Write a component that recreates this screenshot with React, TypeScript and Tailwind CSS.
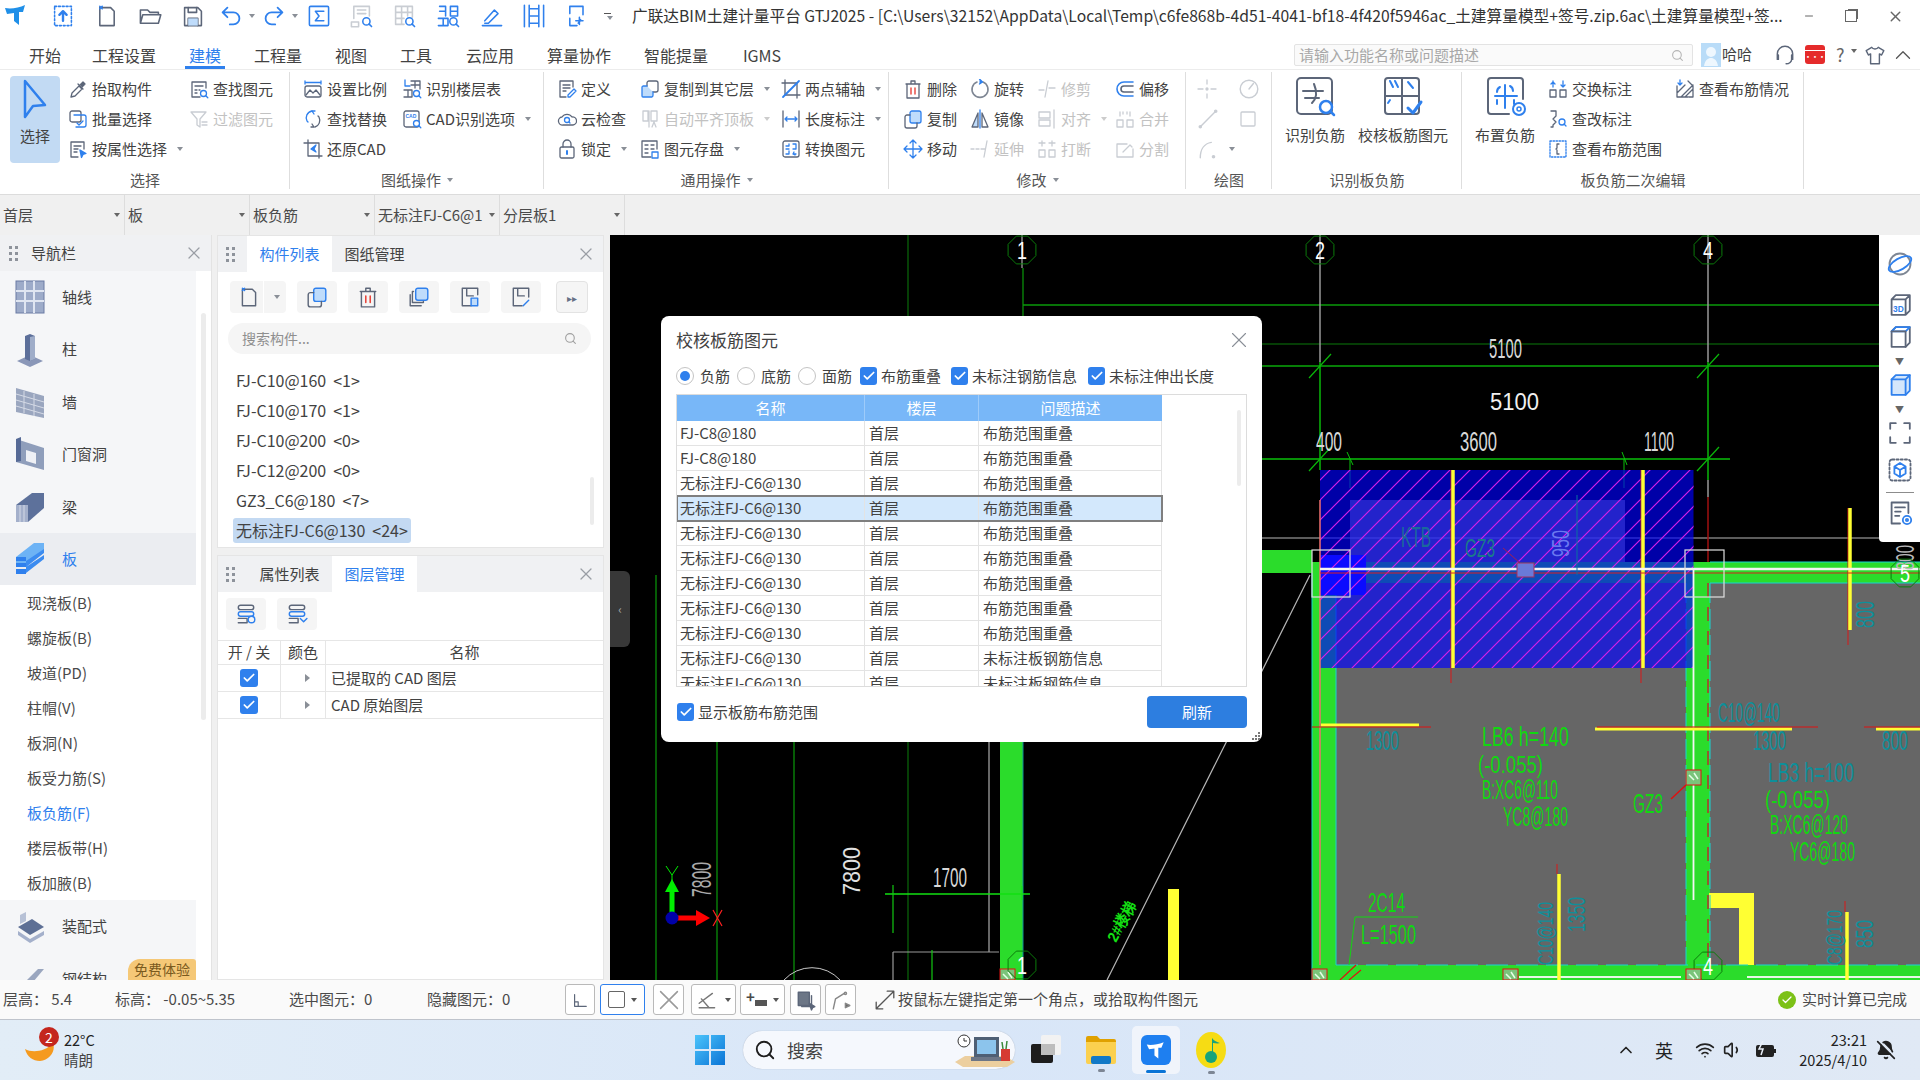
import type { ReactNode } from "react";
import { ChevronUp, Search, Minus, X, Check, Wifi, Volume1, BellOff } from "lucide-react";

const G = "#5c6679";
const B = "#2f80ed";
const L = "#c9cdd3";
const RED = "#e5352b";

function I({ s = 20, c = G, w = 1.3, children }: { s?: number; c?: string; w?: number; children: ReactNode }) {
  return (
    <svg width={s} height={s} viewBox="0 0 20 20" fill="none" stroke={c} strokeWidth={w} strokeLinecap="round" strokeLinejoin="round" className="shrink-0">
      {children}
    </svg>
  );
}

const Q = () => (
  <g stroke={B}>
    <circle cx="14.5" cy="14.5" r="3" fill="#fff" />
    <path d="M16.8 16.8l2 2" />
  </g>
);

const ic = {
  pick: <I><path d="M3 18l1-4 7-7 3 3-7 7z" /><path d="M10 5l5 5M12 6l3-3 2 2-3 3" fill={G} /></I>,
  batch: <I><rect x="2" y="2" width="11" height="11" rx="2" /><path d="M6 6h10a2 2 0 012 2v8a2 2 0 01-2 2H8" stroke={B} /><path d="M9 14l2 2 4-4" stroke={B} /></I>,
  prop: <I><path d="M16 10V3H3v15h7" /><path d="M6 7h7M6 10h4M6 13h3" /><path d="M12 11l6 3.5-3 1-1.5 3z" fill={B} stroke={B} /></I>,
  find: <I><path d="M17 9V3H3v15h8" /><path d="M6 7h8M6 11h2M6 14h2M10 11h1" /><Q /></I>,
  filter: <I c={L}><path d="M2 3h15l-6 7v8l-3-2v-6z" /><path d="M13 13h5M13 16h5" /></I>,
  scale: <I><path d="M2 2v3M18 2v3M3 3.500h14" stroke={B} /><rect x="2" y="7" width="16" height="11" rx="2" /><path d="M3 16l4-5 3 3 3-3 4 5" /></I>,
  replace: <I><path d="M9 2C4 3 2 8 4 12l1 1" stroke={B} /><path d="M12 18c4-1 6-6 4-10l-1-1" /><path d="M12 2l-3 0 2 3" stroke={B} /><path d="M8 18l3 0-2-3" /></I>,
  restore: <I><path d="M5 1v16h14M1 4h15v15" /><path d="M13 6l-5 4 5 3-2-3z" fill={B} stroke={B} /></I>,
  layer: <I><path d="M3 1v6M3 7h5" stroke={B} /><path d="M9 2h9v8M13 2v7M9 6h9M2 11h8v7H2M6 11v7" /><Q /></I>,
  cad: <I><rect x="2" y="2" width="15" height="16" rx="2" /><text x="3.500" y="8.500" fontSize="5" fill={B} stroke="none" fontFamily="Liberation Sans" fontWeight="700">CAD</text><Q /></I>,
  define: <I><path d="M16 8V2H3v16h6" /><path d="M6 6h7M6 9h7M6 12h3" /><path d="M11 16l6-6 2 2-6 6h-2z" stroke={B} /></I>,
  cloud: <I><path d="M6 16a4 4 0 01-1-8 6 6 0 0110 0 4 4 0 011 8z" /><circle cx="10" cy="11" r="2.500" stroke={B} /><path d="M12 13l1 1" stroke={B} /></I>,
  lock: <I><rect x="3" y="8" width="14" height="11" rx="1.500" /><path d="M6 8V5a4 4 0 018 0v3" /><path d="M10 12v3" stroke={B} strokeWidth="2" /></I>,
  copyL: <I><rect x="7" y="2" width="11" height="11" rx="2" /><path d="M7 7H3a2 2 0 00-1 1v9a1 1 0 001 1h9a2 2 0 001-2v-3" fill="#bfdcfb" stroke={B} /></I>,
  autoAlign: <I c={L}><path d="M3 2h5v10H3zM11 2h6v10h-6zM9 2v16M12 18l2-5 2 5" /></I>,
  saveEl: <I><path d="M17 10V2H2v16h9" /><path d="M5 6h3M11 6h3M5 10h3M11 10h3M5 14h3" /><rect x="12" y="13" width="6" height="6" stroke={B} /></I>,
  twoPt: <I><path d="M4 1v15h15M1 4h15v15" /><path d="M2 18L18 2" stroke={B} strokeWidth="1.800" /></I>,
  len: <I><path d="M2 2v16M18 2v16" /><path d="M4 10h12M6 8l-2 2 2 2M14 8l2 2-2 2" stroke={B} /></I>,
  conv: <I><rect x="2" y="2" width="16" height="16" rx="2" /><path d="M5 7h3V5M5 10h3M5 15h3v-3M12 5h3v5h-3M15 15h-3l1-2M12 15l2 1" stroke={B} /></I>,
  del: <I><path d="M3 5h14M8 5V2h4v3M4 5v14h12V5" /><path d="M8 9v6M12 9v6" stroke={RED} /></I>,
  rotate: <I c="#7f8794"><path d="M7 3a8 8 0 106 0" strokeWidth="1.600" /><path d="M9.500 0l3 3-3 2" stroke={B} fill={B} /></I>,
  trim: <I c={L}><path d="M2 11h5M12 9h6M11 2L8 18" /></I>,
  offset: <I c={B} w={1.6}><path d="M18 3H9a7 7 0 000 14h9" /><path d="M18 7H9a3 3 0 000 6h9" stroke={G} /></I>,
  copy: <I><rect x="7" y="2" width="11" height="12" rx="2" fill="#bfdcfb" stroke={B} /><path d="M7 6H4a2 2 0 00-2 2v9a2 2 0 002 2h8a2 2 0 002-2v-3" /></I>,
  mirror: <I><path d="M8 4L2 18h6z" fill="#bfdcfb" stroke={G} /><path d="M12 4l6 14h-6z" /><path d="M10 1v18" stroke={B} /></I>,
  alignI: <I c={L}><rect x="2" y="3" width="11" height="6" /><rect x="2" y="11" width="11" height="6" /><path d="M17 1v18" /></I>,
  merge: <I c={L}><rect x="2" y="11" width="6" height="7" /><rect x="12" y="11" width="6" height="7" /><path d="M5 3v4M15 3v4M8 3v2M12 3v2" /></I>,
  move: <I c={B}><path d="M10 1v18M1 10h18M7 4l3-3 3 3M7 16l3 3 3-3M4 7l-3 3 3 3M16 7l3 3-3 3" /></I>,
  extend: <I c={L}><path d="M1 10h3M6 10h3M11 10h4M17 2l-3 16" /></I>,
  breakI: <I c={L}><rect x="2" y="11" width="6" height="7" /><rect x="12" y="11" width="6" height="7" /><path d="M5 2l0 5M15 2v5M2 4h6M12 4h6" /></I>,
  split: <I c={L}><path d="M18 10v8H2V5h10" /><path d="M8 13l7-7 2 2" /></I>,
  d1: <I c={L}><path d="M10 1v4M10 15v4M1 10h5M14 10h5" /><circle cx="10" cy="10" r="1" fill={L} /></I>,
  d2: <I c={L} s={22}><circle cx="10" cy="10" r="8" /><path d="M10 10l4-5" /></I>,
  d3: <I c={L} s={22}><path d="M3 17L17 3" /><circle cx="3" cy="17" r="1" /><circle cx="17" cy="3" r="1" /></I>,
  d4: <I c={L}><rect x="3" y="3" width="14" height="14" rx="1" /></I>,
  d5: <I c={L} s={22}><path d="M3 18c0-8 4-13 10-14" /><circle cx="15" cy="17" r="1" fill={L} /></I>,
  swap: <I><rect x="2" y="11" width="6" height="7" /><rect x="12" y="11" width="6" height="7" /><path d="M5 2v6M15 2v6M3 5l2-2 2 2M13 6l2 2 2-2" stroke={B} /></I>,
  edit: <I><path d="M3 2h5v5l-3 3 3 3-3 3v2H3" /><circle cx="14" cy="13" r="3" stroke={B} /><path d="M16 15l2 2" stroke={B} /></I>,
  range: <I c={B}><rect x="2" y="2" width="16" height="16" strokeDasharray="1.500 1.500" /><path d="M11 5H9v4l-1 1 1 1v4h2" stroke={G} /></I>,
  see: <I><path d="M2 7v11h11M6 18l12-12M2 14L10 6M10 18l8-8M13 2l5 5v11h-4" /><path d="M5 1v5l-2-2M5 6l2-2" stroke={B} /></I>,
};

const Arrow = ({ c = "#8a8f97" }: { c?: string }) => (
  <span className="inline-block w-0 h-0 border-l-[3.500px] border-r-[3.500px] border-t-[4px] border-l-transparent border-r-transparent ml-[6px] shrink-0" style={{ borderTopColor: c }} />
);

function Item({ icon, label, arrow, off, w }: { icon?: ReactNode; label?: string; arrow?: boolean; off?: boolean; w: string }) {
  return (
    <div className={`flex items-center h-[30px] shrink-0 gap-[4px] whitespace-nowrap text-[15px] ${w} ${off ? "text-[#c2c2c2]" : "text-[#424242]"}`}>
      {icon}
      {label && <span>{label}</span>}
      {arrow && <Arrow c={off ? "#cccccc" : "#8a8f97"} />}
    </div>
  );
}

function Group({ label, arrow, w, children }: { label: string; arrow?: boolean; w: string; children: ReactNode }) {
  return (
    <div className={`relative flex flex-col shrink-0 ${w}`}>
      <div className="flex h-[95px] pt-[4px] shrink-0">{children}</div>
      <div className="h-[30px] shrink-0 flex items-center justify-center text-[15px] text-[#555555]">
        {label}
        {arrow && <Arrow />}
      </div>
      <div className="absolute right-0 top-[2px] bottom-[5px] w-px bg-[#dedede]" />
    </div>
  );
}

function BigIcon({ children }: { children: ReactNode }) {
  return (
    <svg width="44" height="42" viewBox="0 0 44 42" fill="none" strokeLinecap="round" strokeLinejoin="round" className="mx-auto">
      {children}
    </svg>
  );
}

function Ribbon() {
  return (
    <div className="flex h-[125px] bg-white shrink-0 border-b border-[#dcdcdc] shadow-[0_1px_2px_#d5d5d5]">
      <Group label="选择" w="w-[290px]">
        <div className="ml-[10px] mt-[2px] w-[50px] h-[87px] bg-[#c2daf3] rounded-[4px] flex flex-col items-center pt-[3px] shrink-0">
          <svg width="30" height="42" viewBox="0 0 30 42" fill="none"><path d="M5 2l20 24-12 1-8 11z" fill="#c2daf3" stroke="#2f80ed" strokeWidth="2.500" strokeLinejoin="round" /></svg>
          <span className="text-[15px] text-[#424242] mt-[4px]">选择</span>
        </div>
        <div className="ml-[8px] flex flex-col w-[121px] shrink-0">
          <Item icon={ic.pick} label="抬取构件" w="w-full" />
          <Item icon={ic.batch} label="批量选择" w="w-full" />
          <Item icon={ic.prop} label="按属性选择" arrow w="w-full" />
        </div>
        <div className="flex flex-col">
          <Item icon={ic.find} label="查找图元" w="w-full" />
          <Item icon={ic.filter} label="过滤图元" off w="w-full" />
        </div>
      </Group>
      <Group label="图纸操作" arrow w="w-[254px]">
        <div className="ml-[13px] w-[99px] flex flex-col shrink-0">
          <Item icon={ic.scale} label="设置比例" w="w-full" />
          <Item icon={ic.replace} label="查找替换" w="w-full" />
          <Item icon={ic.restore} label="还原CAD" w="w-full" />
        </div>
        <div className="flex flex-col">
          <Item icon={ic.layer} label="识别楼层表" w="w-full" />
          <Item icon={ic.cad} label="CAD识别选项" arrow w="w-full" />
        </div>
      </Group>
      <Group label="通用操作" arrow w="w-[345px]">
        <div className="ml-[13px] w-[83px] flex flex-col shrink-0">
          <Item icon={ic.define} label="定义" w="w-full" />
          <Item icon={ic.cloud} label="云检查" w="w-full" />
          <Item icon={ic.lock} label="锁定" arrow w="w-full" />
        </div>
        <div className="w-[141px] flex flex-col shrink-0">
          <Item icon={ic.copyL} label="复制到其它层" arrow w="w-full" />
          <Item icon={ic.autoAlign} label="自动平齐顶板" arrow off w="w-full" />
          <Item icon={ic.saveEl} label="图元存盘" arrow w="w-full" />
        </div>
        <div className="flex flex-col">
          <Item icon={ic.twoPt} label="两点辅轴" arrow w="w-full" />
          <Item icon={ic.len} label="长度标注" arrow w="w-full" />
          <Item icon={ic.conv} label="转换图元" w="w-full" />
        </div>
      </Group>
      <Group label="修改" arrow w="w-[297px]">
        <div className="ml-[14px] w-[67px] flex flex-col shrink-0">
          <Item icon={ic.del} label="删除" w="w-full" />
          <Item icon={ic.copy} label="复制" w="w-full" />
          <Item icon={ic.move} label="移动" w="w-full" />
        </div>
        <div className="w-[67px] flex flex-col shrink-0">
          <Item icon={ic.rotate} label="旋转" w="w-full" />
          <Item icon={ic.mirror} label="镜像" w="w-full" />
          <Item icon={ic.extend} label="延伸" off w="w-full" />
        </div>
        <div className="w-[78px] flex flex-col shrink-0">
          <Item icon={ic.trim} label="修剪" off w="w-full" />
          <Item icon={ic.alignI} label="对齐" arrow off w="w-full" />
          <Item icon={ic.breakI} label="打断" off w="w-full" />
        </div>
        <div className="flex flex-col">
          <Item icon={ic.offset} label="偏移" w="w-full" />
          <Item icon={ic.merge} label="合并" off w="w-full" />
          <Item icon={ic.split} label="分割" off w="w-full" />
        </div>
      </Group>
      <Group label="绘图" w="w-[86px]">
        <div className="ml-[11px] w-[41px] flex flex-col shrink-0">
          <Item icon={ic.d1} w="w-full" />
          <Item icon={ic.d3} w="w-full" />
          <Item icon={ic.d5} arrow w="w-full" />
        </div>
        <div className="flex flex-col">
          <Item icon={ic.d2} w="w-full" />
          <Item icon={ic.d4} w="w-full" />
        </div>
      </Group>
      <Group label="识别板负筋" w="w-[190px]">
        <div className="w-[86px] flex flex-col items-center text-[15px] text-[#424242] pt-[2px] shrink-0">
          <BigIcon>
            <rect x="4" y="2" width="35" height="36" rx="4" stroke={G} strokeWidth="2" />
            <path d="M10 15h20M21 8c3 7 3 14-2 19M12 22h14" stroke={G} strokeWidth="2" />
            <circle cx="33" cy="31" r="6" stroke={B} strokeWidth="2.500" fill="#fff" />
            <path d="M37 35l4 4" stroke={B} strokeWidth="2.500" />
          </BigIcon>
          <span className="mt-[6px] whitespace-nowrap">识别负筋</span>
        </div>
        <div className="flex flex-col items-center text-[15px] text-[#424242] pt-[2px]">
          <BigIcon>
            <rect x="4" y="2" width="34" height="36" rx="3" stroke={G} strokeWidth="2" />
            <path d="M4 20h34M21 2v36" stroke={G} strokeWidth="2" />
            <path d="M9 5l3 6M14 5l3 6M27 6l5 6M9 24l-2 3" stroke={B} strokeWidth="2" />
            <path d="M27 32l5 5 8-11" stroke={B} strokeWidth="3" fill="#fff" />
          </BigIcon>
          <span className="mt-[6px] whitespace-nowrap">校核板筋图元</span>
        </div>
      </Group>
      <Group label="板负筋二次编辑" w="w-[342px]">
        <div className="w-[86px] flex flex-col items-center text-[15px] text-[#424242] pt-[2px] shrink-0">
          <BigIcon>
            <path d="M26 38H8a3 3 0 01-3-3V5a3 3 0 013-3h29a3 3 0 013 3v18" stroke={G} strokeWidth="2" />
            <path d="M12 20h22M22 9v23M14 16c0-3 1-4 3-5M30 15c0-3-1-4-3-5M14 24v4M31 24v4" stroke={B} strokeWidth="2" />
            <circle cx="36" cy="33" r="6" stroke={B} strokeWidth="2" fill="#fff" />
            <circle cx="36" cy="33" r="2" stroke={B} strokeWidth="1.500" />
          </BigIcon>
          <span className="mt-[6px] whitespace-nowrap">布置负筋</span>
        </div>
        <div className="w-[127px] flex flex-col shrink-0">
          <Item icon={ic.swap} label="交换标注" w="w-full" />
          <Item icon={ic.edit} label="查改标注" w="w-full" />
          <Item icon={ic.range} label="查看布筋范围" w="w-full" />
        </div>
        <div className="flex flex-col">
          <Item icon={ic.see} label="查看布筋情况" w="w-full" />
        </div>
      </Group>
    </div>
  );
}

function TitleBar() {
  return (
    <div className="flex items-center h-[32px] bg-white shrink-0 relative">
      <div className="w-[632px] flex items-center shrink-0">
        <svg width="26" height="24" viewBox="0 0 26 24" className="ml-[4px] mr-[21px]"><path d="M1 4c6 1 14 0 20-3l-2 7-4 0v13l-5-4V9l-7 1z" fill="#1f8fe8" /></svg>
        <I s={24} c={B}><rect x="3" y="2" width="14" height="16" strokeDasharray="1.600 1.600" /><path d="M10 14V6M7 9l3-3 3 3" strokeWidth="2" /></I>
        <div className="ml-[20px]"><I s={24}><path d="M4 3v15h12V6l-3-3H4z" /><path d="M4 2l2 2M6 2L4 4" stroke={B} /></I></div>
        <div className="ml-[19px]"><I s={24}><path d="M2 16V5h6l2 2h7v2M2 16l2-7h15l-2 7z" /></I></div>
        <div className="ml-[19px]"><I s={24}><path d="M3 3h11l3 3v12H3z" /><path d="M6 3v4h7V3M6 18v-6h8v6" /><rect x="6" y="12" width="8" height="6" fill="#bfdcfb" stroke="none" /></I></div>
        <div className="ml-[14px] flex items-center"><I s={24} c={B} w={1.500}><path d="M4 7h8a5 5 0 010 10H9M7 3L3 7l4 4" /></I><Arrow /></div>
        <div className="ml-[7px] flex items-center"><I s={24} c={B} w={1.500}><path d="M16 7H8a5 5 0 000 10h3M13 3l4 4-4 4" /></I><Arrow /></div>
        <div className="ml-[9px]"><I s={24} c={B}><rect x="2" y="2" width="16" height="16" rx="1" /><path d="M14 6H7l3 4-3 4h7" /></I></div>
        <div className="ml-[18px]"><I s={24} c={L}><path d="M4 12V2h13v8M7 5h7M7 8h7M2 15h6v4H2z" /><Q /></I></div>
        <div className="ml-[19px]"><I s={24} c={L}><path d="M3 2h14v9M3 2v15h7M8 2v15M13 2v8M3 7h14M3 12h7" /><Q /></I></div>
        <div className="ml-[20px]"><I s={24} c={B}><path d="M8 2v8M3 2h5M3 6h5M2 12h8v6H2M6 12v6M12 2h6v8h-6zM12 6h6" /><Q /></I></div>
        <div className="ml-[20px]"><I s={24} c={B}><path d="M2 18h16M4 14l8-9 3 3-8 8H4" /></I></div>
        <div className="ml-[18px]"><I s={24} c={B}><path d="M2 1v18M18 1v18M6 1v18M14 1v18M6 4h8M6 10h8M6 16h8" /></I></div>
        <div className="ml-[19px]"><I s={24} c={B}><path d="M15 9V2H4v6M4 12v6h6M9 14h6M12 11v6" /><path d="M13 13l-2 3" /></I></div>
        <div className="ml-[12px] flex flex-col items-center gap-[2px]"><span className="w-[7px] h-px bg-[#555555]" /><Arrow /></div>
      </div>
      <div className="text-[15.700px] text-[#333333] whitespace-nowrap w-[1150px] overflow-hidden">广联达BIM土建计量平台 GTJ2025 - [C:\Users\32152\AppData\Local\Temp\c6fe868b-4d51-4041-bf18-4f420f5946ac_土建算量模型+签号.zip.6ac\土建算量模型+签...</div>
      <div className="ml-auto flex items-center text-[#666666]">
        <Minus size={12} />
        <span className="w-[12px] h-[12px] ml-[30px] border border-[#666666] shadow-[2px_-2px_0_-1px_#666666]" />
        <X size={17} className="ml-[30px] mr-[16px]" />
      </div>
    </div>
  );
}

const tabs: [string, string][] = [
  ["开始", "w-[62px]"], ["工程设置", "w-[96px]"], ["建模", "w-[66px]"], ["工程量", "w-[80px]"], ["视图", "w-[66px]"],
  ["工具", "w-[64px]"], ["云应用", "w-[84px]"], ["算量协作", "w-[94px]"], ["智能提量", "w-[100px]"], ["IGMS", "w-[72px]"],
];

function MenuBar() {
  return (
    <div className="flex items-center h-[38px] bg-white shrink-0 pl-[14px] text-[16px] text-[#424242] border-b border-[#eeeeee] whitespace-nowrap">
      {tabs.map(([t, w]) => (
        <div key={t} className={`${w} shrink-0 h-full pt-[8px] flex items-center justify-center relative ${t === "建模" ? "text-[#2f80ed]" : ""}`}>
          {t}
          {t === "建模" && <div className="absolute bottom-0 left-[13px] right-[13px] h-[3px] bg-[#2f80ed]" />}
        </div>
      ))}
      <div className="ml-[496px] mt-[9px] w-[399px] h-[22px] shrink-0 rounded-[2px] border border-[#e3e3e3] bg-[#fafafa] flex items-center px-[4px] text-[15px] text-[#a8a8a8]">
        请输入功能名称或问题描述
        <Search size={13} className="ml-auto mr-[4px] text-[#b5b5b5]" />
      </div>
      <div className="ml-[8px] mt-[9px] w-[20px] h-[24px] shrink-0 bg-[#b9dcf8] flex items-center justify-center">
        <svg width="18" height="22" viewBox="0 0 18 22"><circle cx="9" cy="8" r="5" fill="#eef7fe" /><path d="M2 22c1-6 4-8 7-8s6 2 7 8z" fill="#eef7fe" /></svg>
      </div>
      <span className="text-[15px] ml-px mt-[8px] shrink-0">哈哈</span>
      <div className="ml-[22px] mt-[9px]"><I s={22}><path d="M3 11V9a7 7 0 0114 0v2M3 10h1v4H3zM16 10h1v4h-1zM16 14c0 2-2 4-5 4" /></I></div>
      <div className="ml-[9px] mt-[8px] w-[20px] h-[19px] shrink-0 bg-[#e52b2b] rounded-[3px] flex flex-col items-center justify-center gap-[2px]">
        <span className="w-[20px] h-px bg-[#ffffff]" />
        <span className="text-[#ffffff] text-[7px] leading-[7px] font-bold">•••</span>
      </div>
      <span className="ml-[11px] mt-[8px] text-[18px] text-[#666666]">?</span>
      <Arrow c="#666666" />
      <div className="ml-[7px] mt-[9px]"><I s={22}><path d="M7 3L2 6l2 4 2-1v9h8V9l2 1 2-4-5-3c-1 2-5 2-6 0z" /></I></div>
      <ChevronUp size={26} strokeWidth={1.200} className="ml-[4px] mt-[9px] shrink-0 text-[#555555]" />
    </div>
  );
}

function SelectorBar() {
  const cells = ["首层", "板", "板负筋", "无标注FJ-C6@1", "分层板1"];
  return (
    <div className="flex h-[40px] bg-[#f0f0f0] shrink-0 text-[15px] text-[#4a4a4a]">
      {cells.map((c) => (
        <div key={c} className="w-[125px] pl-[3px] pr-[4px] flex items-center justify-between border-r border-[#dddddd] whitespace-nowrap overflow-hidden">
          {c}
          <Arrow c="#666666" />
        </div>
      ))}
    </div>
  );
}

const Grip = () => (
  <div className="grid grid-cols-2 gap-x-[4px] gap-y-[3px] w-[8px]">
    {[0, 1, 2, 3, 4, 5].map((i) => <span key={i} className="w-[3px] h-[3px] bg-[#8e939b]" />)}
  </div>
);

function NavIcon({ k }: { k: string }) {
  const shapes: Record<string, ReactNode> = {
    轴线: <><rect x="2" y="2" width="28" height="32" fill="#9dabc9" stroke="#6a7aa3" /><path d="M11 2v32M20 2v32M2 12h28M2 22h28" stroke="#dfe5f1" strokeWidth="2" /></>,
    柱: <><path d="M3 29l13-6 13 6-13 6z" fill="#8a97b8" /><path d="M11 4l5-2 5 2v23l-5 2-5-2z" fill="#5c6f9a" /><path d="M16 5v24l5-2V4z" fill="#9fadc9" /></>,
    墙: <><path d="M2 4l28 8v22L2 28z" fill="#9aa6bf" /><path d="M2 10l28 8M2 16l28 8M2 22l28 8M10 7v22M20 10v22" stroke="#d5dae6" /></>,
    门窗洞: <><path d="M2 3l28 9v22L2 26z" fill="#8f9ebb" /><path d="M12 14l10 3v11l-10-3z" fill="#eef0f5" /><path d="M2 3l5-2 0 24-5 1z" fill="#566a96" /></>,
    梁: <><path d="M2 16L18 4h12v15L14 33H2z" fill="#5d719b" /><path d="M2 16h12v17H2z" fill="#a4b0cb" /><path d="M6 16v17M10 16v17" stroke="#d4dae7" /></>,
    板: <><path d="M2 16L20 2h10v8L12 24H2z" fill="#6db3f5" /><path d="M2 16h10v4H2zM2 22h10v4H2zM2 28h10v5H2z" fill="#2f80ed" /><path d="M12 20L30 8v4L12 26zM12 26l18-12v4L12 32z" fill="#3c8cf0" /></>,
    装配式: <><path d="M4 18l14-8 12 8-14 8z" fill="#5d6f95" /><path d="M4 22l12 8 14-8v4l-14 8L4 26z" fill="#a4b0cb" /><path d="M6 6l6-3v9l-6 3z" fill="#b7c1d6" /></>,
    钢结构: <><path d="M2 30L24 8h6L8 34z" fill="#9aa6bf" /></>,
  };
  return <svg width="32" height="36" viewBox="0 0 32 36" className="shrink-0">{shapes[k]}</svg>;
}

const navTop = ["轴线", "柱", "墙", "门窗洞", "梁", "板"];
const navSub = ["现浇板(B)", "螺旋板(B)", "坡道(PD)", "柱帽(V)", "板洞(N)", "板受力筋(S)", "板负筋(F)", "楼层板带(H)", "板加腋(B)"];

function NavRow({ k, active }: { k: string; active?: boolean }) {
  return (
    <div className={`h-[52.400px] pl-[14px] flex items-center gap-[16px] text-[15px] ${active ? "bg-[#ebedf1] text-[#2f80ed]" : "bg-[#f5f6f8] text-[#424242]"}`}>
      <NavIcon k={k} />
      {k}
    </div>
  );
}

function NavPanel() {
  return (
    <div className="w-[212px] shrink-0 flex flex-col bg-white border-r border-[#e3e3e3]">
      <div className="h-[36px] bg-[#f0f1f3] flex items-center pl-[9px] pr-[7px] text-[15px] text-[#424242] shrink-0">
        <Grip />
        <span className="ml-[14px]">导航栏</span>
        <X size={20} strokeWidth={1.500} className="ml-auto text-[#9a9ea5]" />
      </div>
      <div className="flex flex-1 overflow-hidden relative">
        <div className="w-[196px] shrink-0">
          {navTop.map((k) => <NavRow key={k} k={k} active={k === "板"} />)}
          {navSub.map((s) => (
            <div key={s} className={`h-[35px] pl-[27px] flex items-center text-[15px] ${s === "板负筋(F)" ? "text-[#2f80ed]" : "text-[#4a4a4a]"}`}>{s}</div>
          ))}
          <NavRow k="装配式" />
          <NavRow k="钢结构" />
        </div>
        <div className="ml-[5px] mt-[42px] w-[5px] h-[407px] rounded-full bg-[#ececec]" />
        <div className="absolute left-[128px] bottom-0 w-[68px] h-[21px] bg-[#f5c877] rounded-tl-[12px] rounded-tr-[3px] text-[14px] leading-[21px] text-center text-[#7a5a1e]">免费体验</div>
      </div>
    </div>
  );
}

function TabHead({ tabs: t, active }: { tabs: string[]; active: string }) {
  return (
    <div className="h-[36px] bg-[#f0f1f3] flex items-stretch text-[15px] text-[#424242] shrink-0">
      <div className="w-[29px] flex items-center pl-[8px]"><Grip /></div>
      {t.map((x) => (
        <div key={x} className={`w-[85px] flex items-center justify-center ${x === active ? "bg-white text-[#2f80ed]" : ""}`}>{x}</div>
      ))}
      <div className="ml-auto pr-[7px] flex items-center"><X size={20} strokeWidth={1.500} className="text-[#9a9ea5]" /></div>
    </div>
  );
}

const TBtn = ({ children, w = "w-[40px]" }: { children: ReactNode; w?: string }) => (
  <div className={`${w} h-[32px] bg-[#f5f5f5] rounded-[4px] flex items-center justify-center shrink-0`}>{children}</div>
);

const compList: [string, string][] = [["FJ-C10@160", "<1>"], ["FJ-C10@170", "<1>"], ["FJ-C10@200", "<0>"], ["FJ-C12@200", "<0>"], ["GZ3_C6@180", "<7>"], ["无标注FJ-C6@130", "<24>"]];

function MiddlePanels() {
  return (
    <div className="w-[387px] ml-[5px] shrink-0 flex flex-col gap-[7px]">
      <div className="h-[313px] bg-white border border-[#e5e5e5] relative flex flex-col">
        <TabHead tabs={["构件列表", "图纸管理"]} active="构件列表" />
        <div className="flex mt-[9px] pl-[12px]">
          <div className="flex w-[56px] h-[32px] bg-[#f5f5f5] rounded-[4px] items-center pl-[8px] shrink-0">
            <I s={22}><path d="M4 3v15h12V6l-3-3H4z" /><path d="M4 2l2 2M6 2L4 4" stroke={B} /></I>
            <div className="ml-[3px] pl-[4px] h-full flex items-center border-l border-white"><Arrow /></div>
          </div>
          <div className="ml-[11px]"><TBtn>{<I s={22}><rect x="7" y="2" width="11" height="12" rx="2" fill="#bfdcfb" stroke={B} /><path d="M7 6H4a2 2 0 00-2 2v9a2 2 0 002 2h8a2 2 0 002-2v-3" /></I>}</TBtn></div>
          <div className="ml-[11px]"><TBtn>{<I s={22}><path d="M3 5h14M8 5V2h4v3M4 5v14h12V5" /><path d="M8 9v6M12 9v6" stroke={RED} /></I>}</TBtn></div>
          <div className="ml-[11px]"><TBtn>{<I s={22}><rect x="7" y="2" width="11" height="11" rx="2" fill="#bfdcfb" stroke={B} /><path d="M5 5H4v10h10v-1M2 8v10h10" /></I>}</TBtn></div>
          <div className="ml-[11px]"><TBtn>{<I s={22}><path d="M17 8V2H3v16h8M7 2v7h6" /><rect x="11" y="11" width="6" height="7" fill="#bfdcfb" stroke={B} /></I>}</TBtn></div>
          <div className="ml-[11px]"><TBtn>{<I s={22}><path d="M17 10V2H3v16h8M7 2v7h6" /><path d="M12 18l5-5" stroke={B} /></I>}</TBtn></div>
          <div className="ml-[15px] w-[32px] h-[32px] bg-[#f5f5f5] border border-[#e3e3e3] rounded-[4px] flex items-center justify-center text-[10px] text-[#667085]">▸▸</div>
        </div>
        <div className="mt-[10px] ml-[10px] w-[363px] h-[31px] rounded-full bg-[#f5f5f5] flex items-center px-[14px] text-[14px] text-[#8f8f8f]">
          搜索构件...
          <Search size={13} className="ml-auto text-[#a0a0a0]" />
        </div>
        <div className="mt-[11px] flex flex-col">
          {compList.map(([a, b], i) => (
            <div key={a} className="h-[30px] flex items-center pl-[15px]">
              <div className={`h-[25px] flex items-center gap-[7px] text-[16px] text-[#424242] px-[3px] rounded-[3px] whitespace-nowrap ${i === 5 ? "bg-[#c3d9f2]" : ""}`}>
                <span>{a}</span><span>{b}</span>
              </div>
            </div>
          ))}
        </div>
        <div className="absolute left-[372px] top-[241px] w-[4px] h-[48px] bg-[#ececec] rounded-full" />
      </div>
      <div className="flex-1 bg-white border border-[#e5e5e5] flex flex-col">
        <TabHead tabs={["属性列表", "图层管理"]} active="图层管理" />
        <div className="flex gap-[11px] mt-[6px] pl-[8px]">
          <TBtn>{<I s={22}><rect x="3" y="2" width="14" height="4" rx="2" /><rect x="3" y="8" width="14" height="4" rx="2" stroke={B} /><path d="M3 14h8v4H3" /><circle cx="15" cy="15" r="3" stroke={B} /></I>}</TBtn>
          <TBtn>{<I s={22}><rect x="3" y="2" width="14" height="4" rx="2" /><rect x="3" y="8" width="14" height="4" rx="2" stroke={B} /><path d="M3 14h8v4H3" /><path d="M13 14l3 3 3-3" stroke={B} /></I>}</TBtn>
        </div>
        <div className="mt-[10px] text-[15px] text-[#424242]">
          <div className="flex h-[25px] border-y border-[#e6e6e6]">
            <div className="w-[63px] flex items-center justify-center border-r border-[#e6e6e6]">开 / 关</div>
            <div className="w-[45px] flex items-center justify-center border-r border-[#e6e6e6]">颜色</div>
            <div className="flex-1 flex items-center justify-center">名称</div>
          </div>
          {["已提取的 CAD 图层", "CAD 原始图层"].map((n) => (
            <div key={n} className="flex h-[27px] border-b border-[#e6e6e6]">
              <div className="w-[63px] flex items-center justify-center border-r border-[#e6e6e6]">
                <span className="w-[18px] h-[18px] rounded-[3px] bg-[#2f80ed] flex items-center justify-center"><Check size={14} strokeWidth={3} className="text-white" /></span>
              </div>
              <div className="w-[45px] flex items-center justify-center border-r border-[#e6e6e6]">
                <span className="w-0 h-0 border-y-[4px] border-y-transparent border-l-[5px] border-l-[#8a8f97] ml-[9px]" />
              </div>
              <div className="flex-1 flex items-center pl-[5px]">{n}</div>
            </div>
          ))}
        </div>
      </div>
    </div>
  );
}

const Cad = ({ x, y, t, w, h, fill = "#d8d8d8", rot, bold }: { x: number; y: number; t: string; w: number; h: number; fill?: string; rot?: number; bold?: boolean }) => (
  <text
    x={x}
    y={y}
    fontFamily="Liberation Sans"
    fontSize={h * 1.38}
    fill={fill}
    textLength={w}
    lengthAdjust="spacingAndGlyphs"
    fontWeight={bold ? 700 : 400}
    transform={rot ? `rotate(${rot} ${x} ${y})` : undefined}
  >
    {t}
  </text>
);

const Bubble = ({ x, y, n }: { x: number; y: number; n: string }) => {
  const r = 15;
  const pts = Array.from({ length: 8 }, (_, i) => {
    const a = Math.PI / 8 + (i * Math.PI) / 4;
    return `${(x + r * Math.cos(a)).toFixed(1)},${(y + r * Math.sin(a)).toFixed(1)}`;
  }).join(" ");
  return (
    <g>
      <polygon points={pts} fill="none" stroke="#0b7a0b" strokeWidth="1" />
      <Cad x={x - 5} y={y + 9} t={n} w={10} h={18} fill="#ffffff" />
    </g>
  );
};

const Line = ({ p, c, w = 1, d }: { p: [number, number, number, number]; c: string; w?: number; d?: string }) => (
  <line x1={p[0]} y1={p[1]} x2={p[2]} y2={p[3]} stroke={c} strokeWidth={w} strokeDasharray={d} />
);

const YR = ({ x, y1, y2, r2 }: { x: number; y1: number; y2: number; r2: number }) => (
  <g>
    <Line p={[x - 2, y1, x - 2, r2]} c="#d81818" w={1} />
    <Line p={[x, y1, x, y2]} c="#ffff33" w={3.500} />
  </g>
);

const Ticked = ({ x, y }: { x: number; y: number }) => <Line p={[x - 11, y + 12, x + 11, y - 12]} c="#0ab80a" w={1.200} />;

const RBox = ({ x, y, h = 15 }: { x: number; y: number; h?: number }) => (
  <g>
    <rect x={x} y={y} width={15} height={h} fill="#7ac47a" stroke="#e01010" strokeWidth="1" />
    <path d={`M${x + 3} ${y + 5}l5 5M${x + 8} ${y + 3}l4 6`} stroke="#e6ffe6" strokeWidth="1.500" />
  </g>
);

function CadDrawing() {
  const W = "#2bdc2b";
  const C = "#19d4d4";
  const TEAL = "#0e8f9a";
  const GT = "#10d810";
  return (
    <svg width="1310" height="745" viewBox="610 235 1310 745" className="block">
      <defs>
        <pattern id="hatch" width="20" height="20" patternUnits="userSpaceOnUse">
          <path d="M-2 22L22 -2M-2 2L2 -2M18 22L22 18" stroke="#d81ee8" strokeWidth="1.200" />
        </pattern>
      </defs>
      <rect x="610" y="235" width="1310" height="745" fill="#000000" />
      {/* rooms */}
      <rect x="1336" y="583" width="350" height="382" fill="#666666" />
      <rect x="1350" y="500" width="275" height="83" fill="#666666" />
      <rect x="1709" y="583" width="211" height="382" fill="#666666" />
      {/* verticals under the dialog */}
      {[656, 717, 794].map((x) => <Line key={x} p={[x, 575, x, 980]} c="#0a9a0a" w={1.200} />)}
      <Line p={[908, 235, 908, 980]} c="#0a6a0a" w={1.200} />
      <Line p={[989, 700, 989, 952]} c="#8a8a8a" w={1.500} />
      <Line p={[893, 952, 999, 952]} c="#9a9a9a" w={1.200} />
      <Line p={[893, 952, 893, 980]} c="#9a9a9a" w={1.200} />
      <rect x="1000" y="700" width="23" height="280" fill={W} />
      <Line p={[1023, 700, 1023, 980]} c={TEAL} />
      <Line p={[1023, 268, 1023, 320]} c="#0a9a0a" w={1.200} />
      <Line p={[1022, 235, 1022, 268]} c="#8a8a8a" w={1.500} />
      {/* horizontals */}
      <Line p={[1023, 305, 1879, 305]} c="#0a9a0a" w={1.500} />
      <Line p={[1262, 344, 1879, 344]} c="#0a7a0a" w={1.200} />
      <Line p={[1262, 366, 1879, 366]} c="#0aa80a" w={1.500} />
      <Line p={[1262, 459, 1730, 459]} c="#0ac00a" w={1.500} />
      <Line p={[1262, 538, 1920, 538]} c="#b8b8b8" w={1.200} />
      {/* axes */}
      <Line p={[1320, 235, 1320, 362]} c="#999999" w={1.500} />
      <Line p={[1320, 362, 1320, 470]} c="#0ab80a" w={1.500} />
      <Line p={[1708, 235, 1708, 362]} c="#999999" w={1.500} />
      <Line p={[1708, 362, 1708, 480]} c="#0ab80a" w={1.500} />
      <Line p={[1708, 480, 1708, 497]} c="#999999" w={1.500} />
      <Line p={[1708, 497, 1708, 583]} c="#a01010" w={1.500} />
      <Line p={[1350, 459, 1350, 488]} c="#0ac00a" />
      <Line p={[1624, 459, 1624, 488]} c="#0ac00a" />
      <Ticked x={1320} y={366} />
      <Ticked x={1708} y={366} />
      <Ticked x={1320} y={459} />
      <Ticked x={1708} y={459} />
      <Line p={[1347, 452, 1353, 465]} c="#0ac00a" />
      <Line p={[1622, 452, 1627, 465]} c="#0ac00a" />
      <Bubble x={1022} y={250} n="1" />
      <Bubble x={1320} y={250} n="2" />
      <Bubble x={1708} y={250} n="4" />
      {/* walls */}
      <rect x="1262" y="550" width="50" height="23" fill={W} />
      <rect x="1312" y="562" width="608" height="21" fill={W} />
      <rect x="1312" y="573" width="24" height="407" fill={W} />
      <rect x="1686" y="583" width="24" height="397" fill={W} />
      <rect x="1312" y="965" width="608" height="15" fill={W} />
      <path d="M1709 893h45v72h-15v-57h-30z" fill="#ffff33" />
      <Line p={[1336, 583, 1336, 965]} c={C} />
      <Line p={[1312, 573, 1312, 980]} c={C} />
      <Line p={[1686, 583, 1686, 965]} c={C} d="20 6" />
      <Line p={[1710, 583, 1710, 965]} c={C} d="20 6" />
      <Line p={[1336, 965, 1920, 965]} c={C} d="22 8" />
      <Line p={[1710, 562, 1920, 562]} c={C} />
      <Line p={[1710, 583, 1920, 583]} c={C} />
      <Line p={[1708, 583, 1708, 965]} c="#b83030" w={1.500} d="14 10" />
      <Line p={[1519, 977, 1681, 977]} c="#e8f8e8" w={2} />
      <Line p={[1747, 977, 1920, 977]} c="#e8f8e8" w={2} />
      {/* blue overlay */}
      <rect x="1320" y="555" width="46" height="40" fill="#2020ff" />
      <rect x="1320" y="470" width="373.500" height="198" fill="#0000ff" fillOpacity="0.66" />
      <rect x="1320" y="470" width="373.500" height="198" fill="url(#hatch)" />
      <Line p={[1320, 500, 1320, 965]} c="#f07070" w={1.500} />
      <YR x={1453} y1={470} y2={668} r2={683} />
      <YR x={1643} y1={470} y2={668} r2={683} />
      <YR x={1850} y1={508} y2={630} r2={645} />
      <Line p={[1320, 569, 1920, 569]} c="#f4f4f4" w={2.500} />
      <Line p={[1320, 573, 1920, 573]} c="#d82020" w={1} />
      <Line p={[1693.500, 570, 1693.500, 900]} c="#f4f4f4" w={1.800} />
      <rect x="1312" y="550" width="38" height="47" fill="none" stroke="#e0e0e0" strokeWidth="1.200" />
      <rect x="1685" y="550" width="39" height="47" fill="none" stroke="#e0e0e0" strokeWidth="1.200" />
      <rect x="1517" y="563" width="17" height="14" fill="#6a7ad8" stroke="#a03060" />
      <Line p={[1503, 548, 1520, 563]} c="#a02050" />
      {/* faint labels */}
      <Cad x={1401} y={547} t="KTB" w={30} h={21} fill="#1a6a9a" />
      <Cad x={1465} y={557} t="GZ3" w={30} h={19} fill="#1a7a8a" />
      <Cad x={1569} y={557} t="950" w={27} h={18} fill="#6a78f0" rot={-90} />
      <Line p={[1577, 495, 1577, 575]} c="#0a70a0" />
      {/* dims */}
      <Cad x={1489} y={358} t="5100" w={33} h={20} />
      <Cad x={1490} y={410} t="5100" w={49} h={18} fill="#f0f0f0" />
      <Cad x={1316} y={451} t="400" w={26} h={20} />
      <Cad x={1460} y={451} t="3600" w={37} h={20} />
      <Cad x={1644} y={451} t="1100" w={30} h={20} />
      <Cad x={1874} y={628} t="800" w={27} h={19} fill={TEAL} rot={-90} />
      <Cad x={1914} y={570} t="800" w={25} h={19} fill="#b8b8b8" rot={-90} />
      <Bubble x={1905} y={573} n="5" />
      {/* horizontal rebar */}
      <Line p={[1321, 725, 1419, 725]} c="#ffff33" w={3} />
      <Line p={[1312, 727, 1431, 727]} c="#e01010" w={1.200} />
      <Line p={[1595, 729, 1792, 729]} c="#ffff33" w={3} />
      <Line p={[1597, 727, 1818, 727]} c="#e01010" w={1.200} />
      <Line p={[1876, 729, 1920, 729]} c="#ffff33" w={3} />
      <Line p={[1864, 727, 1920, 727]} c="#e01010" w={1.200} />
      <Cad x={1366} y={750} t="1300" w={33} h={20} fill={TEAL} />
      <Cad x={1753} y={750} t="1300" w={33} h={20} fill={TEAL} />
      <Cad x={1882} y={750} t="800" w={26} h={20} fill={TEAL} />
      <Cad x={1718} y={722} t="C10@140" w={62} h={20} fill={TEAL} />
      {/* slab labels */}
      <Cad x={1482} y={746} t="LB6 h=140" w={87} h={20} fill={GT} />
      <Cad x={1478} y={773} t="(-0.055)" w={65} h={18} fill={GT} />
      <Cad x={1482} y={799} t="B:XC6@110" w={76} h={20} fill={GT} />
      <Cad x={1503} y={826} t="YC8@180" w={65} h={20} fill={GT} />
      <Cad x={1633} y={813} t="GZ3" w={30} h={20} fill={GT} />
      <Line p={[1671, 799, 1686, 785]} c="#e01010" w={1.500} />
      <RBox x={1686} y={770} />
      <Cad x={1768} y={782} t="LB3 h=100" w={86} h={20} fill={TEAL} />
      <Cad x={1765} y={808} t="(-0.055)" w={65} h={18} fill={GT} />
      <Cad x={1770} y={834} t="B:XC6@120" w={78} h={20} fill={GT} />
      <Cad x={1790} y={861} t="YC6@180" w={65} h={20} fill={GT} />
      <Cad x={1368} y={912} t="2C14" w={37} h={20} fill={GT} />
      <path d="M1418 917h-63l-6 48" stroke={GT} strokeWidth="1" fill="none" />
      <Cad x={1361} y={944} t="L=1500" w={55} h={20} fill={GT} />
      <YR x={1559} y1={874} y2={980} r2={864} />
      <YR x={1847} y1={912} y2={980} r2={901} />
      <Cad x={1553} y={965} t="C10@140" w={63} h={16} fill={TEAL} rot={-90} />
      <Cad x={1585} y={932} t="1350" w={35} h={18} fill={TEAL} rot={-90} />
      <Cad x={1842} y={965} t="C8@170" w={55} h={16} fill={TEAL} rot={-90} />
      <Cad x={1873} y={948} t="850" w={28} h={18} fill={TEAL} rot={-90} />
      <Line p={[1340, 980, 1356, 965]} c="#e01010" w={1.200} />
      <Line p={[1349, 980, 1361, 970]} c="#e01010" w={1.200} />
      <Bubble x={1708} y={966} n="4" />
      <RBox x={1312} y={969} h={11} />
      <RBox x={1503} y={969} h={11} />
      <RBox x={1686} y={969} h={11} />
      <RBox x={1000} y={969} h={11} />
      <Bubble x={1022} y={965} n="1" />
      {/* lower left */}
      <Line p={[1310, 575, 1107, 980]} c="#b8b8b8" w={1.200} />
      <rect x="1168" y="889" width="11" height="91" fill="#ffff33" />
      <Cad x={1116} y={943} t="2#楼梯" w={43} h={11} fill="#14e014" rot={-62} bold />
      <Cad x={711} y={897} t="7800" w={35} h={20} fill="#aaaaaa" rot={-90} />
      <Cad x={860} y={895} t="7800" w={48} h={17} fill="#e0e0e0" rot={-90} />
      <Cad x={933} y={887} t="1700" w={34} h={20} />
      <Line p={[885, 894, 1030, 894]} c="#12e012" w={1.500} />
      <Line p={[893, 885, 893, 933]} c="#12c812" w={1.200} />
      <Line p={[932, 950, 932, 980]} c="#12c812" w={1.200} />
      <Line p={[1022, 886, 1022, 900]} c="#12e012" />
      <path d="M784 980a38 38 0 0 1 56 0" stroke="#c8c8c8" strokeWidth="1" fill="none" />
      {/* ucs */}
      <Line p={[672, 918, 672, 890]} c="#00ee00" w={5} />
      <path d="M672 879l7 13h-14z" fill="#00ee00" />
      <path d="M666 866l6 9 6-9M672 875v7" stroke="#00ee00" fill="none" />
      <Line p={[672, 918, 697, 918]} c="#ff0000" w={5} />
      <path d="M710 918l-14 8v-16z" fill="#ff0000" />
      <path d="M713 910l9 16M722 910l-9 16" stroke="#ff2020" strokeWidth="1.200" />
      <circle cx="672" cy="918" r="6.500" fill="#0000a8" />
    </svg>
  );
}

function Radio({ on, label }: { on?: boolean; label: string }) {
  return (
    <div className="flex items-center gap-[6px] whitespace-nowrap">
      <span className="w-[18px] h-[18px] rounded-full border border-[#c4c4c4] flex items-center justify-center bg-white shrink-0">
        {on && <span className="w-[10px] h-[10px] rounded-full bg-[#2f80ed]" />}
      </span>
      {label}
    </div>
  );
}

function CheckBox({ label, w }: { label: string; w: string }) {
  return (
    <div className={`flex items-center gap-[4px] whitespace-nowrap ${w}`}>
      <span className="w-[17px] h-[18px] rounded-[3px] bg-[#2f80ed] flex items-center justify-center shrink-0"><Check size={14} strokeWidth={3} className="text-white" /></span>
      {label}
    </div>
  );
}

const rows = [
  ["FJ-C8@180", "布筋范围重叠"], ["FJ-C8@180", "布筋范围重叠"], ["无标注FJ-C6@130", "布筋范围重叠"], ["无标注FJ-C6@130", "布筋范围重叠"],
  ["无标注FJ-C6@130", "布筋范围重叠"], ["无标注FJ-C6@130", "布筋范围重叠"], ["无标注FJ-C6@130", "布筋范围重叠"], ["无标注FJ-C6@130", "布筋范围重叠"],
  ["无标注FJ-C6@130", "布筋范围重叠"], ["无标注FJ-C6@130", "未标注板钢筋信息"], ["无标注FJ-C6@130", "未标注板钢筋信息"],
];

function Dialog() {
  return (
    <div className="absolute left-[51px] top-[81px] w-[601px] h-[426px] bg-white rounded-[8px] px-[15px] text-[15px] text-[#424242]">
      <div className="h-[48px] flex items-center justify-between">
        <span className="text-[17px]">校核板筋图元</span>
        <X size={26} strokeWidth={1} className="text-[#8a8f97] -mr-[5px]" />
      </div>
      <div className="h-[24px] mb-[6px] flex items-center">
        <div className="w-[61px] shrink-0"><Radio on label="负筋" /></div>
        <div className="w-[61px] shrink-0"><Radio label="底筋" /></div>
        <div className="w-[62px] shrink-0"><Radio label="面筋" /></div>
        <CheckBox label="布筋重叠" w="w-[91px] shrink-0" />
        <CheckBox label="未标注钢筋信息" w="w-[137px] shrink-0" />
        <CheckBox label="未标注伸出长度" w="w-[126px] shrink-0" />
      </div>
      <div className="h-[293px] border border-[#dcdcdc] overflow-hidden relative">
        <div className="w-[485px] flex h-[26px] bg-[#78b7f8] text-white text-center leading-[26px]">
          <div className="w-[188px] border-r border-[#9ecbfa]">名称</div>
          <div className="w-[114px] border-r border-[#9ecbfa]">楼层</div>
          <div className="flex-1">问题描述</div>
        </div>
        {rows.map(([a, b], i) => (
          <div key={i} className={`w-[485px] flex h-[25px] leading-[24px] ${i === 3 ? "bg-[#d3e8fc] outline-2 -outline-offset-1 outline-[#7f7f7f]" : "border-b border-[#e3e3e3]"}`}>
            <div className="w-[188px] pl-[3px] border-r border-[#e3e3e3]">{a}</div>
            <div className="w-[114px] pl-[4px] border-r border-[#e3e3e3]">首层</div>
            <div className="flex-1 pl-[4px] border-r border-[#e3e3e3]">{b}</div>
          </div>
        ))}
        <div className="absolute right-[5px] top-[15px] w-[4px] h-[76px] bg-[#ececec] rounded-full" />
      </div>
      <div className="mt-[9px] h-[32px] flex items-center justify-between">
        <div className="pl-px"><CheckBox label="显示板筋布筋范围" w="w-auto" /></div>
        <div className="w-[100px] h-[32px] bg-[#2d7ee0] rounded-[4px] text-white flex items-center justify-center">刷新</div>
      </div>
      <div className="absolute right-[2px] bottom-[2px] grid grid-cols-3 gap-px w-[8px]">
        {[0, 1, 2, 3, 4, 5, 6, 7, 8].map((i) => <span key={i} className={`w-[2px] h-[2px] ${i === 0 || i === 1 || i === 3 ? "bg-transparent" : "bg-[#777777]"}`} />)}
      </div>
    </div>
  );
}

function ViewStrip() {
  return (
    <div className="absolute right-0 top-0 w-[41px] h-[307px] bg-white rounded-bl-[4px] flex flex-col items-center pt-[15px]">
      <I s={28} c="#7d8694"><circle cx="10" cy="10" r="7.500" /><ellipse cx="10" cy="10" rx="9" ry="4" transform="rotate(-30 10 10)" stroke={B} /></I>
      <div className="mt-[13px]"><I s={28}><path d="M4 6l3-3h10v11l-3 3H4zM4 6h10v11M14 6l3-3" /><text x="5" y="15" fontSize="6" fill={B} stroke="none" fontFamily="Liberation Sans" fontWeight="700">3D</text></I></div>
      <div className="mt-[4px]"><I s={28}><path d="M4 6l3-3h10v11l-3 3H4z" /><path d="M4 6l3-3h10l-3 3z" stroke={B} /><path d="M14 6v11M4 6h10" /></I></div>
      <span className="mt-[6px] h-[9px] text-[9px] leading-[9px] text-[#666666]">▼</span>
      <div className="mt-[5px]"><I s={28} c={B}><path d="M4 6l3-3h10v11l-3 3H4z" fill="#d4e6fb" /><path d="M14 6v11M4 6h10M14 6l3-3" /></I></div>
      <span className="mt-[6px] h-[9px] text-[9px] leading-[9px] text-[#666666]">▼</span>
      <div className="mt-[5px]"><I s={28}><path d="M3 7V3h4M13 3h4v4M17 13v4h-4M7 17H3v-4" /></I></div>
      <div className="mt-[9px]"><I s={28}><rect x="2.500" y="2.500" width="15" height="15" rx="2" strokeDasharray="1.500 1.500" /><path d="M10 5l4 2.500v5L10 15l-4-2.500v-5zM6 7.500l4 2.500 4-2.500M10 10v5" stroke={B} /></I></div>
      <div className="mt-[8px] w-[28px] h-px bg-[#8c8c8c]" />
      <div className="mt-[6px]"><I s={28}><path d="M16 10V2.500H4v15h6" /><path d="M6.500 6h7M6.500 9h4M6.500 12h3" /><circle cx="15" cy="15" r="3" stroke={B} /><circle cx="15" cy="15" r="0.800" stroke={B} /></I></div>
    </div>
  );
}

const SBtn = ({ w, on, children }: { w: string; on?: boolean; children: ReactNode }) => (
  <div className={`${w} h-[31px] rounded-[3px] border flex items-center justify-center shrink-0 bg-white ${on ? "border-[#2f80ed] bg-[#eef5fd]" : "border-[#b9b9b9]"}`}>{children}</div>
);

function StatusBar() {
  return (
    <div className="h-[40px] bg-[#fafafa] flex items-center text-[15px] text-[#4a4a4a] border-b border-[#bfc4cc] shrink-0 whitespace-nowrap">
      <span className="ml-[3px] w-[112px]">层高：  5.4</span>
      <span className="w-[174px]">标高：  -0.05~5.35</span>
      <span className="w-[138px]">选中图元：0</span>
      <span className="w-[138px]">隐藏图元：0</span>
      <SBtn w="w-[30px]"><I s={18}><path d="M4 4v13h13M4 12h4v5" /></I></SBtn>
      <div className="ml-[5px]"><SBtn w="w-[45px]" on><span className="w-[17px] h-[17px] border border-[#666666] rounded-[2px]" /><Arrow c="#555555" /></SBtn></div>
      <div className="ml-[8px]"><SBtn w="w-[31px]"><I s={24} c="#9a9a9a"><path d="M3 3l14 14M17 3L3 17" /></I></SBtn></div>
      <div className="ml-[7px]"><SBtn w="w-[45px]"><I s={22} c="#777777"><path d="M2 17h14M2 13L14 4M4 9l7 8" /></I><Arrow c="#555555" /></SBtn></div>
      <div className="ml-[4px]"><SBtn w="w-[45px]"><span className="text-[15px] font-bold leading-none -mt-[6px]">+</span><span className="w-[12px] h-[6px] bg-[#555555] mt-[6px]" /><Arrow c="#555555" /></SBtn></div>
      <div className="ml-[5px]"><SBtn w="w-[31px]"><I s={22}><rect x="3" y="3" width="10" height="12" fill="#6c7686" /><path d="M15 6v10H6" /><path d="M13 13l5 3-2 1-1 2z" fill={G} /></I></SBtn></div>
      <div className="ml-[4px]"><SBtn w="w-[31px]"><I s={22} c="#888888"><path d="M3 18l2-9 8-5" /><circle cx="14" cy="4" r="1" /><path d="M14 13l4 2-4 2z" fill="#666666" /></I></SBtn></div>
      <div className="ml-[18px]"><I s={22} c="#555555" w={1.200}><path d="M2 18L18 2M12 2h6v6M2 12v6h6" /></I></div>
      <span className="ml-[2px]">按鼠标左键指定第一个角点，或拾取构件图元</span>
      <div className="ml-auto flex items-center mr-[13px]">
        <span className="w-[18px] h-[18px] rounded-full bg-[#7cc117] flex items-center justify-center mr-[6px]"><Check size={12} strokeWidth={2.500} className="text-white" /></span>
        实时计算已完成
      </div>
    </div>
  );
}

function TaskBar() {
  return (
    <div className="flex-1 flex items-center bg-linear-to-r from-[#e2edf7] via-[#d8e6f8] to-[#e0e9f5] relative text-[#222222]">
      <div className="ml-[25px] w-[39px] h-[32px] mt-[14px] shrink-0">
        <svg width="30" height="20" viewBox="0 0 30 20"><path d="M0 8c7 4 20 3 28-6 3 8-3 17-13 18C8 20 2 16 0 8z" fill="#f59a1f" /></svg>
      </div>
      <div className="absolute left-[39px] top-[7px] w-[20px] h-[20px] rounded-full bg-[#c4261d] text-white text-[14px] leading-[20px] text-center">2</div>
      <div className="text-[14.500px] leading-[20px] w-[631px] shrink-0">
        <div>22°C</div>
        <div className="text-[#444444]">晴朗</div>
      </div>
      <svg width="30" height="30" viewBox="0 0 30 30" className="shrink-0">
        <defs><linearGradient id="wl" x1="0" y1="0" x2="1" y2="1"><stop offset="0" stopColor="#4cc4fb" /><stop offset="1" stopColor="#0a74d6" /></linearGradient></defs>
        <path d="M0 0h14v14H0zM16 0h14v14H16zM0 16h14v14H0zM16 16h14v14H16z" fill="url(#wl)" />
      </svg>
      <div className="ml-[18px] w-[272px] h-[38px] rounded-full bg-[#f5f8fd] shadow-[0_0_1px_#9aa5b8] flex items-center pl-[11px] shrink-0">
        <Search size={22} strokeWidth={2} className="text-[#1d1d1d]" />
        <span className="ml-[11px] text-[18px] text-[#444444]">搜索</span>
        <svg width="60" height="36" viewBox="0 0 60 36" className="ml-auto">
          <path d="M0 30l10-6h40l10 6-8 5H8z" fill="#eccf9f" />
          <circle cx="9" cy="9" r="6" fill="#fff" stroke="#333" />
          <path d="M9 6v3h3" stroke="#333" fill="none" />
          <rect x="19" y="5" width="25" height="20" fill="#4e5f74" />
          <rect x="22" y="8" width="19" height="14" fill="#8cc4ec" />
          <rect x="16" y="25" width="30" height="4" fill="#6c7686" />
          <rect x="46" y="17" width="9" height="12" fill="#d63a32" />
          <path d="M48 17l-1-7M51 17l1-8" stroke="#3b8a3b" strokeWidth="1.500" />
        </svg>
      </div>
      <div className="ml-[16px] w-[30px] h-[30px] relative shrink-0">
        <div className="absolute left-[10px] top-0 w-[20px] h-[20px] bg-[#f2f2f2] rounded-[2px]" />
        <div className="absolute left-0 top-[9px] w-[22px] h-[19px] bg-[#1d1d1d] rounded-[2px]" />
        <div className="absolute left-[10px] top-[9px] w-[14px] h-[11px] bg-[#bdbdbd]" />
      </div>
      <div className="ml-[25px] w-[30px] relative shrink-0">
        <svg width="30" height="28" viewBox="0 0 30 28"><path d="M0 2a2 2 0 012-2h9l3 3h14a2 2 0 012 2v4H0z" fill="#e0a100" /><path d="M0 6h30v20a2 2 0 01-2 2H2a2 2 0 01-2-2z" fill="#fbd04f" /><rect x="5" y="20" width="20" height="8" rx="2" fill="#1279c7" /></svg>
        <span className="absolute left-[12px] -bottom-[8px] w-[7px] h-[3px] rounded-full bg-[#7d8694]" />
      </div>
      <div className="ml-[16px] w-[48px] h-[48px] rounded-[5px] bg-[#f0f4fb] flex items-center justify-center relative shrink-0">
        <div className="w-[30px] h-[30px] rounded-[6px] bg-[#1e7ff0] flex items-center justify-center">
          <svg width="20" height="20" viewBox="0 0 26 24"><path d="M1 5c6 1 14 0 22-3l-3 7-4 0v14l-5-4V10l-7 1z" fill="#ffffff" /></svg>
        </div>
        <span className="absolute left-[14px] bottom-px w-[20px] h-[3px] rounded-full bg-[#0a74d6]" />
      </div>
      <div className="ml-[16px] w-[30px] relative shrink-0">
        <svg width="30" height="36" viewBox="0 0 30 36"><ellipse cx="15" cy="18" rx="15" ry="18" fill="#f6dc14" /><circle cx="15" cy="25" r="6" fill="#16a37b" /><path d="M16 25V6c2 3 5 4 8 5-2 1-5 0-7 0v14z" fill="#16a37b" /></svg>
        <span className="absolute left-[12px] -bottom-[6px] w-[7px] h-[3px] rounded-full bg-[#7d8694]" />
      </div>
      <ChevronUp size={20} strokeWidth={2} className="ml-[390px] shrink-0" />
      <span className="ml-[19px] text-[18px]">英</span>
      <Wifi size={20} className="ml-[22px] shrink-0" />
      <Volume1 size={20} className="ml-[8px] shrink-0" />
      <svg width="22" height="18" viewBox="0 0 22 18" className="ml-[12px] shrink-0"><rect x="1" y="4" width="18" height="12" rx="2" fill="#222222" /><rect x="19" y="8" width="2" height="4" fill="#222222" /><path d="M8 0L4 8h4l-2 6" stroke="#eaf0f9" strokeWidth="1.500" fill="none" /></svg>
      <div className="ml-[20px] text-right text-[14.500px] leading-[20px] w-[70px] shrink-0">
        <div>23:21</div>
        <div>2025/4/10</div>
      </div>
      <BellOff size={20} className="ml-[9px] shrink-0" fill="#222222" />
    </div>
  );
}

export default function App() {
  return (
    <div className="w-[1920px] h-[1080px] overflow-hidden flex flex-col bg-[#f0f0f0] font-['Noto_Sans_CJK_SC','Noto_Sans',sans-serif]">
      <TitleBar />
      <MenuBar />
      <Ribbon />
      <SelectorBar />
      <div className="flex h-[745px] shrink-0">
        <NavPanel />
        <MiddlePanels />
        <div className="ml-[6px] relative w-[1310px] shrink-0 overflow-hidden bg-black">
          <CadDrawing />
          <div className="absolute left-0 top-[336px] w-[20px] h-[76px] bg-[#383838] rounded-r-[6px] flex items-center justify-center text-[#aaaaaa] text-[12px]">‹</div>
          <Dialog />
          <ViewStrip />
        </div>
      </div>
      <StatusBar />
      <TaskBar />
    </div>
  );
}
